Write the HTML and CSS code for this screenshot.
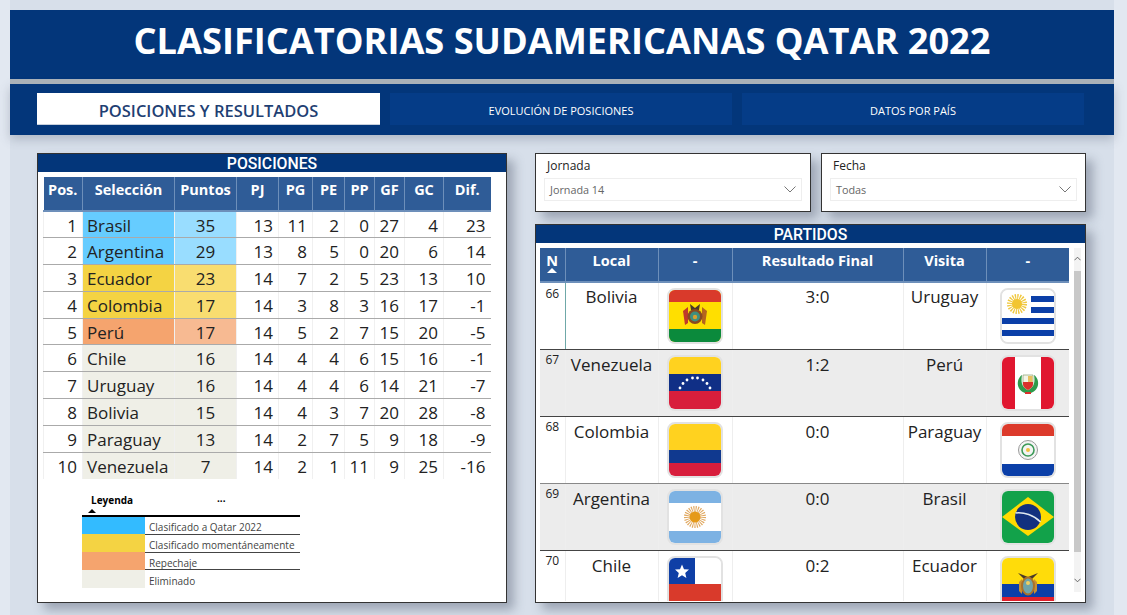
FILE: index.html
```html
<!DOCTYPE html>
<html lang="es">
<head>
    <meta charset="UTF-8">
    <title>Clasificatorias Sudamericanas Qatar 2022</title>
    <link rel="stylesheet" href="styles.css">
</head>
<body>

<div class="report">
    <header class="banner">
        <h1>CLASIFICATORIAS SUDAMERICANAS QATAR 2022</h1>
    </header>

    <nav class="tabs">
        <a class="tab active">POSICIONES Y RESULTADOS</a>
        <a class="tab">EVOLUCIÓN DE POSICIONES</a>
        <a class="tab">DATOS POR PAÍS</a>
    </nav>

    <main class="content">
        <!-- tabla de posiciones -->
        <section class="card standings">
            <h2 class="card-title">POSICIONES</h2>
            <table class="table pos-table">
                <colgroup>
                    <col class="c-pos"><col class="c-sel"><col class="c-pts"><col class="c-pj"><col class="c-pg">
                    <col class="c-pe"><col class="c-pp"><col class="c-gf"><col class="c-gc"><col class="c-dif">
                </colgroup>
                <thead>
                    <tr><th>Pos.</th><th>Selección</th><th>Puntos</th><th>PJ</th><th>PG</th><th>PE</th><th>PP</th><th>GF</th><th>GC</th><th>Dif.</th></tr>
                </thead>
                <tbody>
                    <tr class="qualified"><td>1</td><td class="team">Brasil</td><td class="pts">35</td><td>13</td><td>11</td><td>2</td><td>0</td><td>27</td><td>4</td><td>23</td></tr>
                    <tr class="qualified"><td>2</td><td class="team">Argentina</td><td class="pts">29</td><td>13</td><td>8</td><td>5</td><td>0</td><td>20</td><td>6</td><td>14</td></tr>
                    <tr class="provisional"><td>3</td><td class="team">Ecuador</td><td class="pts">23</td><td>14</td><td>7</td><td>2</td><td>5</td><td>23</td><td>13</td><td>10</td></tr>
                    <tr class="provisional"><td>4</td><td class="team">Colombia</td><td class="pts">17</td><td>14</td><td>3</td><td>8</td><td>3</td><td>16</td><td>17</td><td>-1</td></tr>
                    <tr class="playoff"><td>5</td><td class="team">Perú</td><td class="pts">17</td><td>14</td><td>5</td><td>2</td><td>7</td><td>15</td><td>20</td><td>-5</td></tr>
                    <tr class="out"><td>6</td><td class="team">Chile</td><td class="pts">16</td><td>14</td><td>4</td><td>4</td><td>6</td><td>15</td><td>16</td><td>-1</td></tr>
                    <tr class="out"><td>7</td><td class="team">Uruguay</td><td class="pts">16</td><td>14</td><td>4</td><td>4</td><td>6</td><td>14</td><td>21</td><td>-7</td></tr>
                    <tr class="out"><td>8</td><td class="team">Bolivia</td><td class="pts">15</td><td>14</td><td>4</td><td>3</td><td>7</td><td>20</td><td>28</td><td>-8</td></tr>
                    <tr class="out"><td>9</td><td class="team">Paraguay</td><td class="pts">13</td><td>14</td><td>2</td><td>7</td><td>5</td><td>9</td><td>18</td><td>-9</td></tr>
                    <tr class="out"><td>10</td><td class="team">Venezuela</td><td class="pts">7</td><td>14</td><td>2</td><td>1</td><td>11</td><td>9</td><td>25</td><td>-16</td></tr>
                </tbody>
            </table>

            <div class="legend">
                <div class="legend-head">
                    <span class="legend-name">Leyenda<i class="sort-up"></i></span>
                    <span class="legend-more">...</span>
                </div>
                <div class="legend-row"><span class="swatch sw-qualified"></span>Clasificado a Qatar 2022</div>
                <div class="legend-row"><span class="swatch sw-provisional"></span>Clasificado momentáneamente</div>
                <div class="legend-row"><span class="swatch sw-playoff"></span>Repechaje</div>
                <div class="legend-row"><span class="swatch sw-out"></span>Eliminado</div>
            </div>
        </section>

        <div class="side">
            <div class="filters">
                <div class="card slicer slicer-wide">
                    <div class="slicer-label">Jornada</div>
                    <div class="slicer-box">Jornada 14
                        <svg class="chevron" viewBox="0 0 12 7"><path d="M.5.5 6 6 11.5.5"/></svg>
                    </div>
                </div>
                <div class="card slicer">
                    <div class="slicer-label">Fecha</div>
                    <div class="slicer-box">Todas
                        <svg class="chevron" viewBox="0 0 12 7"><path d="M.5.5 6 6 11.5.5"/></svg>
                    </div>
                </div>
            </div>

            <!-- partidos -->
            <section class="card matches">
                <h2 class="card-title">PARTIDOS</h2>
                <div class="matches-body">
                    <table class="table match-table">
                        <colgroup>
                            <col class="m-n"><col class="m-local"><col class="m-flag"><col class="m-res"><col class="m-vis"><col class="m-flag2">
                        </colgroup>
                        <thead>
                            <tr><th>N<i class="sort-up white"></i></th><th>Local</th><th>-</th><th>Resultado Final</th><th>Visita</th><th>-</th></tr>
                        </thead>
                        <tbody>
                            <tr class="first">
                                <td class="num">66</td><td>Bolivia</td>
                                <td><div class="flag"><svg viewBox="0 0 52 52">
                                    <rect width="52" height="52" fill="#ffdf00"/><rect width="52" height="12" fill="#d93a2b"/><rect y="39" width="52" height="13" fill="#0b8a3c"/>
                                    <path d="M14 21 19 17V33L16 35Z" fill="#c0392b"/><path d="M38 21 33 17V33L36 35Z" fill="#b5651d"/>
                                    <path d="M21 14 26 18 31 14 30 20H22Z" fill="#4a3a28"/>
                                    <circle cx="26" cy="26.500" r="7.500" fill="#8a4a20"/><circle cx="26" cy="26.500" r="5" fill="#3f8f7f"/><circle cx="26" cy="27" r="2.200" fill="#d8a030"/>
                                </svg></div></td>
                                <td>3:0</td><td>Uruguay</td>
                                <td><div class="flag"><svg viewBox="0 0 52 52">
                                    <rect width="52" height="52" fill="#fff"/>
                                    <path d="M29 6H52V12H29ZM29 17H52V23H29ZM0 28H52V34H0ZM0 40H52V46H0Z" fill="#0b3fa8"/>
                                    <circle cx="15" cy="14" r="7" fill="none" stroke="#f0c840" stroke-width="6" stroke-dasharray="1.2 1"/><circle cx="15" cy="14" r="5" fill="#f2c531"/>
                                </svg></div></td>
                            </tr>
                            <tr class="alt">
                                <td class="num">67</td><td>Venezuela</td>
                                <td><div class="flag"><svg viewBox="0 0 52 52">
                                    <rect width="52" height="17" fill="#ffd21f"/><rect y="17" width="52" height="17" fill="#102f86"/><rect y="34" width="52" height="18" fill="#d81e3c"/>
                                    <g fill="#fff"><circle cx="11" cy="31" r="1.400"/><circle cx="14" cy="26.500" r="1.400"/><circle cx="18" cy="23" r="1.400"/><circle cx="23.500" cy="21" r="1.400"/><circle cx="28.500" cy="21" r="1.400"/><circle cx="34" cy="23" r="1.400"/><circle cx="38" cy="26.500" r="1.400"/><circle cx="41" cy="31" r="1.400"/></g>
                                </svg></div></td>
                                <td>1:2</td><td>Perú</td>
                                <td><div class="flag"><svg viewBox="0 0 52 52">
                                    <rect width="52" height="52" fill="#fff"/><rect width="13" height="52" fill="#e0162f"/><rect x="39" width="13" height="52" fill="#e0162f"/>
                                    <path d="M20 18C14 22 14 33 23 36H29C38 33 38 22 32 18 33 24 33 30 26 33 19 30 19 24 20 18Z" fill="#2d9a4a"/>
                                    <path d="M21 18H31V27C31 30 28 32 26 33 24 32 21 30 21 27Z" fill="#f4f4e8" stroke="#8aa070" stroke-width=".7"/>
                                    <path d="M21 25H31V27C31 30 28 32 26 33 24 32 21 30 21 27Z" fill="#d9302c"/><rect x="26" y="19" width="4.500" height="6" fill="#e8c060"/><rect x="23" y="35" width="6" height="2" fill="#d9302c"/>
                                </svg></div></td>
                            </tr>
                            <tr>
                                <td class="num">68</td><td>Colombia</td>
                                <td><div class="flag"><svg viewBox="0 0 52 52">
                                    <rect width="52" height="26" fill="#ffd21f"/><rect y="26" width="52" height="13" fill="#10398f"/><rect y="39" width="52" height="13" fill="#d81e3c"/>
                                </svg></div></td>
                                <td>0:0</td><td>Paraguay</td>
                                <td><div class="flag"><svg viewBox="0 0 52 52">
                                    <rect width="52" height="52" fill="#fff"/><rect width="52" height="12" fill="#dc3a2b"/><rect y="40" width="52" height="12" fill="#0b3fa8"/>
                                    <circle cx="26" cy="26" r="9.500" fill="#f4f4f4" stroke="#999"/><circle cx="26" cy="26" r="6" fill="none" stroke="#3c9a58" stroke-width="1.600"/><circle cx="26" cy="26" r="2" fill="#f0c040"/>
                                </svg></div></td>
                            </tr>
                            <tr class="alt soft">
                                <td class="num">69</td><td>Argentina</td>
                                <td><div class="flag"><svg viewBox="0 0 52 52">
                                    <rect width="52" height="52" fill="#fff"/><rect width="52" height="12" fill="#7db2e3"/><rect y="40" width="52" height="12" fill="#7db2e3"/>
                                    <circle cx="26" cy="26" r="8" fill="none" stroke="#e0a860" stroke-width="6" stroke-dasharray="1 1"/><circle cx="26" cy="26" r="5.500" fill="#e59a1a"/>
                                </svg></div></td>
                                <td>0:0</td><td>Brasil</td>
                                <td><div class="flag"><svg viewBox="0 0 52 52">
                                    <rect width="52" height="52" fill="#12a24a"/><path d="M26 6 52 26 26 45 0 26Z" fill="#ffdb00"/>
                                    <circle cx="26" cy="26" r="13" fill="#12307f"/><path d="M13.500 22C22 21 32 24 38.500 31" fill="none" stroke="#dfe8f0" stroke-width="1.600"/>
                                </svg></div></td>
                            </tr>
                            <tr class="last">
                                <td class="num">70</td><td>Chile</td>
                                <td><div class="flag"><svg viewBox="0 0 52 52">
                                    <rect width="52" height="52" fill="#fff"/><rect width="26" height="26" fill="#0f3fa6"/><rect y="26" width="52" height="26" fill="#d93a2b"/>
                                    <path d="M13 6.500 15 11.200 20 11.600 16.200 15 17.400 20 13 17.300 8.600 20 9.800 15 6 11.600 11 11.200Z" fill="#fff"/>
                                </svg></div></td>
                                <td>0:2</td><td>Ecuador</td>
                                <td><div class="flag"><svg viewBox="0 0 52 52">
                                    <rect width="52" height="26" fill="#ffdc0a"/><rect y="26" width="52" height="13" fill="#0b3fa8"/><rect y="39" width="52" height="13" fill="#e0202c"/>
                                    <path d="M17 24 20 21V36L17 33ZM35 24 32 21V36L35 33Z" fill="#c89030"/>
                                    <path d="M16 15 26 19 36 15 30 21H22Z" fill="#4a3a28"/>
                                    <ellipse cx="26" cy="28" rx="6" ry="8.500" fill="#6fa4a8" stroke="#a8702a" stroke-width="2"/><circle cx="26" cy="25" r="2" fill="#f0d060"/>
                                </svg></div></td>
                            </tr>
                        </tbody>
                    </table>
                    <div class="scrollbar">
                        <svg class="scroll-arrow up" viewBox="0 0 8 5"><path d="M.5 4.500 4 1 7.500 4.500"/></svg>
                        <div class="scroll-thumb"></div>
                        <svg class="scroll-arrow" viewBox="0 0 8 5"><path d="M.5.5 4 4 7.500.5"/></svg>
                    </div>
                </div>
            </section>
        </div>
    </main>
</div>

</body>
</html>
```

FILE: styles.css
```css
* {
    box-sizing: border-box;
}
body {
    margin: 0;
    height: 615px;
    overflow: hidden;
    background-color: #e2e8f1;
    font-family: "Open Sans", "Liberation Sans", sans-serif;
    color: #222;
}
.report {
    width: 1104px;
    height: 615px;
    margin-left: 10px;
    padding-top: 10px;
    background-color: #d7dfea;
}

/* cabecera */
.banner {
    height: 69px;
    background-color: #03367a;
    display: flex;
    align-items: center;
    justify-content: center;
}
.banner h1 {
    margin: 0 0 10px;
    color: #fff;
    font-size: 36.200px;
    font-weight: 700;
    white-space: nowrap;
}
.tabs {
    height: 51px;
    margin-top: 5px;
    padding: 9px 30px 10px 27px;
    display: flex;
    gap: 10px;
    background-color: #03367a;
    box-shadow: 0 -5px 0 #aab1b8, 0 4px 10px rgba(80, 90, 110, 0.3);
}
.tab {
    flex: 1;
    display: flex;
    align-items: center;
    justify-content: center;
    padding-top: 3px;
    background-color: #053c87;
    color: #fff;
    font-size: 11px;
}
.tab.active {
    flex: 0 0 343px;
    background-color: #fff;
    border-bottom: 1px solid #c8d0dc;
    color: #1f3f73;
    font-size: 16.500px;
    font-weight: 600;
}

/* contenido */
.content {
    display: flex;
    gap: 28px;
    padding: 18px 0 0 27px;
}
.card {
    background-color: #fff;
    border: 1px solid #333;
    box-shadow: 7px 7px 10px rgba(70, 80, 100, 0.4);
}
.card-title {
    height: 18px;
    margin: 0;
    background-color: #03367a;
    color: #fff;
    font-family: Roboto, "Open Sans", sans-serif;
    font-size: 15.800px;
    font-weight: 500;
    line-height: 19px;
    text-align: center;
}
.standings {
    width: 470px;
    height: 450px;
}
.side {
    width: 551px;
    display: flex;
    flex-direction: column;
    gap: 12px;
}

/* tablas */
.table {
    table-layout: fixed;
    border-collapse: collapse;
    background-color: #fff;
}
.table th {
    background-color: #2f5c97;
    color: #fff;
    font-size: 14.500px;
    font-weight: 700;
    vertical-align: top;
    border-left: 1px solid #6d8fba;
    border-bottom: 2px solid #6d8fba;
    padding: 3px 0 0;
}
.table th:first-child {
    border-left: 0;
}
.pos-table {
    width: 447px;
    margin: 5px 0 0 5px;
}
.pos-table thead tr {
    height: 34px;
}
.pos-table tbody tr {
    height: 26.800px;
}
.pos-table td {
    padding: 2px 5px 0 0;
    font-size: 17px;
    line-height: 22px;
    text-align: right;
    border-bottom: 1px solid #aaa;
    border-left: 1px solid #f0f0f0;
}
.pos-table tr:last-child td {
    border-bottom: 0;
}
.pos-table td.team {
    padding: 2px 0 0 4px;
    text-align: left;
    white-space: nowrap;
}
.pos-table td.pts {
    padding: 2px 0 0;
    text-align: center;
}
.c-pos { width: 39px; }
.c-sel { width: 92px; }
.c-pts { width: 62px; }
.c-pj { width: 42px; }
.c-pg { width: 34px; }
.c-pe { width: 32px; }
.c-pp { width: 30px; }
.c-gf { width: 30px; }
.c-gc { width: 39px; }
.c-dif { width: 47px; }

.qualified .team { background-color: #66ccff; }
.qualified .pts { background-color: #99ddff; }
.provisional .team { background-color: #f4d343; }
.provisional .pts { background-color: #f9dd70; }
.playoff .team { background-color: #f5a46e; }
.playoff .pts { background-color: #f7ba92; }
.out .team,
.out .pts { background-color: #efefe7; }

.sort-up {
    display: block;
    width: 0;
    height: 0;
    margin: 0 auto;
    border-left: 4px solid transparent;
    border-right: 4px solid transparent;
    border-bottom: 4px solid #000;
}
.sort-up.white {
    margin-top: -2px;
    border-left-width: 5px;
    border-right-width: 5px;
    border-bottom: 5px solid #fff;
}

/* leyenda */
.legend {
    width: 218px;
    margin: 12px 0 0 44px;
    font-size: 10px;
}
.legend-head {
    height: 26px;
    position: relative;
    border-bottom: 2px solid #000;
    font-weight: 700;
    color: #000;
}
.legend-name {
    display: inline-block;
    margin-left: 9px;
    line-height: 18px;
}
.legend-name .sort-up {
    margin: 0 0 0 -3px;
}
.legend-more {
    position: absolute;
    left: 135px;
    top: 0;
}
.legend-row {
    height: 17.800px;
    display: flex;
    align-items: center;
    gap: 4px;
    color: #444;
    border-bottom: 1px solid #444;
    padding-top: 4px;
    white-space: nowrap;
}
.legend-row:last-child {
    border-bottom: 0;
}
.swatch {
    width: 63px;
    height: 18px;
    margin-top: -4px;
    flex-shrink: 0;
}
.sw-qualified { background-color: #33bbff; }
.sw-provisional { background-color: #f4d343; }
.sw-playoff { background-color: #f5a46e; }
.sw-out { background-color: #efefe7; }

/* filtros */
.filters {
    display: flex;
    gap: 10px;
}
.slicer {
    width: 265px;
    height: 59px;
    padding: 3px 8px 0;
}
.slicer-wide {
    width: 276px;
}
.slicer-label {
    height: 21px;
    padding-left: 3px;
    font-size: 12px;
    line-height: 17px;
    color: #222;
}
.slicer-box {
    height: 23px;
    display: flex;
    align-items: center;
    justify-content: space-between;
    padding: 0 5px;
    border: 1px solid #eee;
    font-size: 10.800px;
    color: #666;
}
.chevron {
    width: 12px;
    height: 7px;
    fill: none;
    stroke: #777;
}

/* partidos */
.matches {
    height: 379px;
    overflow: hidden;
}
.matches-body {
    height: 358px;
    padding: 5px 4px 0 4px;
    display: flex;
    gap: 5px;
    overflow: hidden;
}
.match-table {
    width: 529px;
    height: 356px;
    flex-shrink: 0;
}
.match-table thead tr {
    height: 34px;
}
.match-table tbody tr {
    height: 67px;
}
.match-table td {
    font-size: 17px;
    line-height: 22px;
    text-align: center;
    vertical-align: top;
    padding: 4px 0 0;
    border-bottom: 1px solid #444;
    border-left: 1px solid #eee;
    white-space: nowrap;
}
.match-table td:first-child {
    border-left: 0;
}
.match-table tr.alt td {
    background-color: #ececec;
}
.match-table tr.soft td {
    border-bottom-color: #444;
}
.match-table tr:nth-child(3) td {
    border-bottom-color: #888;
}
.match-table tr.last td {
    border-bottom: 0;
}
.match-table tr.first td {
    padding-top: 3px;
}
.match-table tr.first td:nth-child(2) {
    border-left-color: #6fa8a8;
}
.match-table td.num {
    padding-top: 2px;
    font-size: 12px;
    line-height: 16px;
}
.m-n { width: 25px; }
.m-local { width: 93px; }
.m-flag { width: 74px; }
.m-res { width: 171px; }
.m-vis { width: 83px; }
.m-flag2 { width: 83px; }

.flag {
    width: 56px;
    height: 56px;
    margin: 1px auto 0;
    border: 2px solid #e2e2e2;
    border-radius: 8px;
    overflow: hidden;
    background-color: #fff;
}
.match-table tr.first .flag {
    margin-top: 2px;
}
.flag svg {
    display: block;
    width: 52px;
    height: 52px;
}

.scrollbar {
    width: 7px;
    height: 344px;
    flex-shrink: 0;
    display: flex;
    flex-direction: column;
    align-items: center;
    background-color: #f3f3f3;
}
.scroll-arrow {
    width: 7px;
    height: 5px;
    margin: 8px 0;
    flex-shrink: 0;
    fill: none;
    stroke: #555;
}
.scroll-arrow.up {
    margin-bottom: 10px;
}
.scroll-thumb {
    width: 100%;
    height: 281px;
    margin-bottom: 18px;
    flex-shrink: 0;
    background-color: #c8c8c8;
}
```
